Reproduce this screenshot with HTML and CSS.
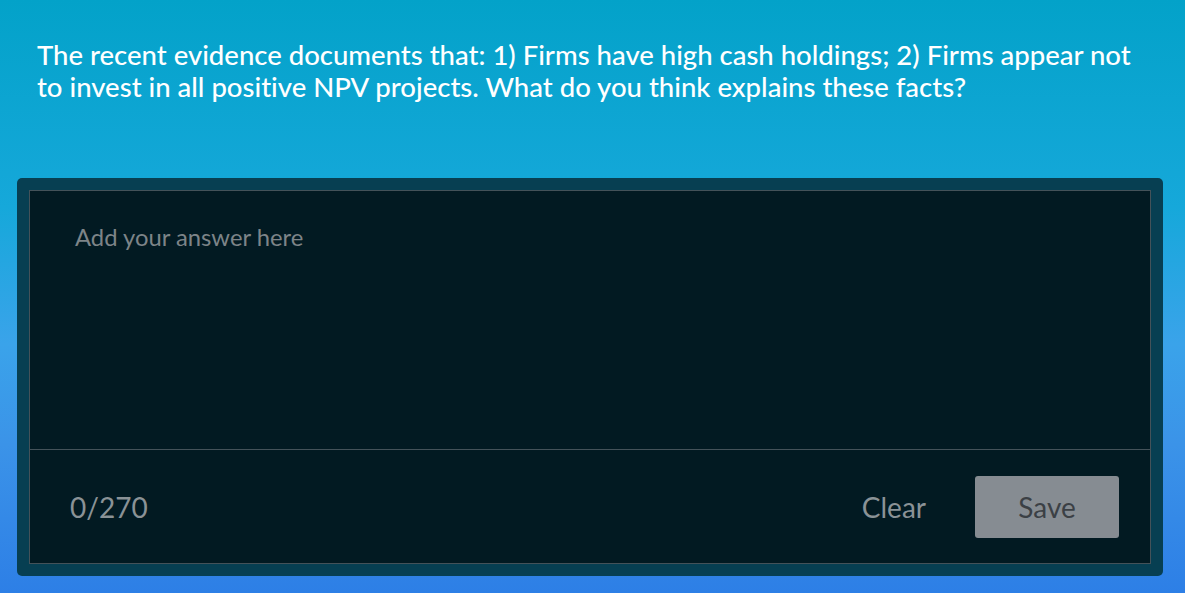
FILE: index.html
```html
<!DOCTYPE html>
<html>
<head>
<meta charset="utf-8">
<link rel="stylesheet" href="styles.css">
</head>
<body>
<div class="page">
  <p class="question">The recent evidence documents that: 1) Firms have high cash holdings; 2) Firms appear not to invest in all positive NPV projects. What do you think explains these facts?</p>
  <div class="card">
    <div class="inner">
      <div class="answer">Add your answer here</div>
      <div class="footer">
        <span class="count">0/270</span>
        <div class="actions">
          <button class="clear">Clear</button>
          <button class="save">Save</button>
        </div>
      </div>
    </div>
  </div>
</div>
</body>
</html>
```

FILE: styles.css
```css
html, body {
  margin: 0;
  height: 100%;
}
body {
  font-family: Lato, "Open Sans", sans-serif;
  font-variant-ligatures: no-common-ligatures;
  background: linear-gradient(180deg, #03a2c9 0%, #16a8da 35%, #3aa3ea 58%, #3b93e8 75%, #2d7fe6 100%);
}
.page {
  padding: 39px 22px 0 17px;
  box-sizing: border-box;
  height: 593px;
  display: flex;
  flex-direction: column;
}
.question {
  margin: 0 0 0 20px;
  color: #ffffff;
  font-size: 27.5px;
  font-weight: 500;
  line-height: 32px;
  max-width: 1110px;
  height: 139px;
}
.card {
  background: #073f52;
  border-radius: 5px;
  padding: 12px;
  height: 398px;
  box-sizing: border-box;
}
.inner {
  background: #021a22;
  border: 1px solid #445259;
  height: 100%;
  box-sizing: border-box;
  display: flex;
  flex-direction: column;
}
.answer {
  height: 259px;
  box-sizing: border-box;
  padding: 32px 0 0 45px;
  color: #7d8488;
  font-size: 23.8px;
  border-bottom: 1px solid #445259;
}
.footer {
  flex: 1;
  display: flex;
  align-items: center;
  justify-content: space-between;
  padding: 0 31px 0 40px;
}
.count {
  color: #8a9296;
  font-size: 28px;
}
.actions {
  display: flex;
  align-items: center;
  gap: 49px;
}
.clear {
  background: none;
  border: none;
  padding: 0;
  font-family: inherit;
  font-size: 28px;
  color: #8a9296;
}
.save {
  width: 144px;
  height: 62px;
  border: none;
  border-radius: 3px;
  background: #868c92;
  color: #3b4045;
  font-family: inherit;
  font-size: 28px;
}
```
